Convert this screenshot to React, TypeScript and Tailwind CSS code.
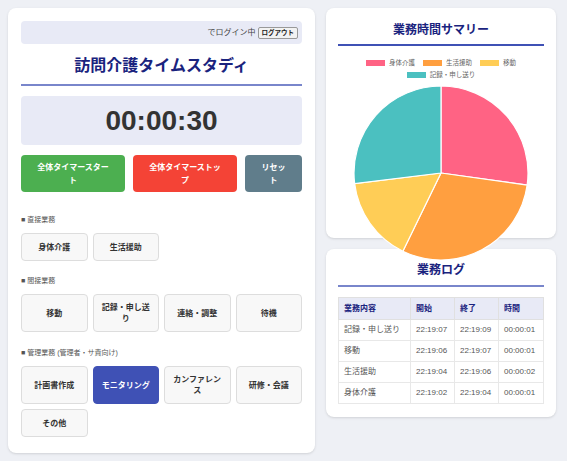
import React from 'react'

const direct = ['身体介護', '生活援助']
const indirect = ['移動', '記録・申し送り', '連絡・調整', '待機']
const admin = ['計画書作成', 'モニタリング', 'カンファレンス', '研修・会議', 'その他']

const legend = [
  { label: '身体介護', color: 'bg-[#ff6384]' },
  { label: '生活援助', color: 'bg-[#ff9f40]' },
  { label: '移動', color: 'bg-[#ffcd56]' },
  { label: '記録・申し送り', color: 'bg-[#4bc0c0]' },
]

const logs = [
  ['記録・申し送り', '22:19:07', '22:19:09', '00:00:01'],
  ['移動', '22:19:06', '22:19:07', '00:00:01'],
  ['生活援助', '22:19:04', '22:19:06', '00:00:02'],
  ['身体介護', '22:19:02', '22:19:04', '00:00:01'],
]

function TaskButton({ label, active }: { label: string; active?: boolean }) {
  return (
    <button
      className={
        active
          ? 'flex min-h-[28px] items-center justify-center rounded-[4px] border border-[#3f51b5] bg-[#3f51b5] px-[7px] py-[7px] text-[8px] font-bold leading-[11px] text-white'
          : 'flex min-h-[28px] items-center justify-center rounded-[4px] border border-[#dddddd] bg-[#f8f8f8] px-[7px] py-[7px] text-[8px] font-semibold leading-[11px] text-[#333]'
      }
    >
      {label}
    </button>
  )
}

function Section({ title, items, active, className }: { title: string; items: string[]; active?: string; className: string }) {
  return (
    <div className={className}>
      <p className="text-[7px] leading-[12px] text-[#555]">■ {title}</p>
      <div className="mt-[7px] grid grid-cols-4 gap-[5px]">
        {items.map((it) => (
          <TaskButton key={it} label={it} active={it === active} />
        ))}
      </div>
    </div>
  )
}

function Pie() {
  return (
    <svg width="176" height="176" viewBox="0 0 176 176" className="relative z-10">
      <g stroke="#fff" strokeWidth="1.2">
        <path d="M88 88 L88 1 A87 87 0 0 1 174.15 100.11 Z" fill="#ff6384" />
        <path d="M88 88 L174.15 100.11 A87 87 0 0 1 49.86 166.2 Z" fill="#ff9f40" />
        <path d="M88 88 L49.86 166.2 A87 87 0 0 1 1.65 98.6 Z" fill="#ffcd56" />
        <path d="M88 88 L1.65 98.6 A87 87 0 0 1 88 1 Z" fill="#4bc0c0" />
      </g>
    </svg>
  )
}

export default function App() {
  return (
    <div className="flex min-h-screen gap-[11px] bg-[#eef0f5] p-2 font-['Liberation_Sans','Noto_Sans_CJK_JP',sans-serif] text-[#333]">
      <div className="w-[307px] rounded-lg bg-white p-[13px] shadow-sm">
        <div className="flex h-[23px] items-center justify-end gap-[2px] rounded-[4px] bg-[#e8eaf6] pr-[4px]">
          <span className="text-[8px] text-[#444]">でログイン中</span>
          <button className="h-[12px] rounded-[2px] border border-[#999] bg-[#f2f2f2] px-[3px] text-[6.5px] font-bold leading-[10px] text-[#222]">
            ログアウト
          </button>
        </div>

        <h1 className="mt-[10px] border-b-2 border-[#7986cb] pb-[6px] text-center text-[16px] font-bold leading-[24px] text-[#1a237e]">
          訪問介護タイムスタディ
        </h1>

        <div className="mt-[10px] flex h-[49px] items-center justify-center rounded-[4px] bg-[#e8eaf6]">
          <span className="text-[28px] font-bold text-[#333]">00:00:30</span>
        </div>

        <div className="mt-[10px] flex gap-[8px]">
          <button className="flex h-[37px] w-[104px] items-center justify-center rounded-[4px] bg-[#4caf50] px-[14px] text-[8px] font-bold leading-[13px] text-white">
            全体タイマースタート
          </button>
          <button className="flex h-[37px] w-[104px] items-center justify-center rounded-[4px] bg-[#f44336] px-[14px] text-[8px] font-bold leading-[13px] text-white">
            全体タイマーストップ
          </button>
          <button className="flex h-[37px] flex-1 items-center justify-center rounded-[4px] bg-[#607d8b] px-[14px] text-[8px] font-bold leading-[13px] text-white">
            リセット
          </button>
        </div>

        <Section className="mt-[22px]" title="直接業務" items={direct} />
        <Section className="mt-[14px]" title="間接業務" items={indirect} />
        <Section className="mt-[15px]" title="管理業務 (管理者・サ責向け)" items={admin} active="モニタリング" />
      </div>

      <div className="flex w-[230px] flex-col gap-[11px]">
        <div className="flex h-[230px] flex-col rounded-lg bg-white px-[12px] pt-[13px] shadow-sm">
          <h2 className="border-b-2 border-[#3f51b5] pb-[5px] text-center text-[12px] font-bold leading-[18px] text-[#1a237e]">
            業務時間サマリー
          </h2>
          <div className="mt-[11px] flex flex-wrap justify-center gap-x-[8px] px-[20px]">
            {legend.map((l) => (
              <div key={l.label} className="flex h-[12px] items-center gap-[4px]">
                <span className={`h-[6px] w-[19px] ${l.color}`} />
                <span className="text-[6.5px] text-[#666]">{l.label}</span>
              </div>
            ))}
          </div>
          <div className="mt-[4px] flex justify-center">
            <Pie />
          </div>
        </div>

        <div className="rounded-lg bg-white px-[12px] pb-[13px] pt-[12px] shadow-sm">
          <h2 className="border-b-2 border-[#7986cb] pb-[6px] text-center text-[12px] font-bold leading-[18px] text-[#1a237e]">
            業務ログ
          </h2>
          <table className="mt-[10px] w-full border-collapse text-left text-[8px]">
            <thead>
              <tr className="bg-[#e8eaf6] text-[#1a237e]">
                <th className="w-[72px] border border-[#e0e0e0] px-[5px] py-[5px] font-bold leading-[11px]">業務内容</th>
                <th className="w-[44px] border border-[#e0e0e0] px-[5px] py-[5px] font-bold leading-[11px]">開始</th>
                <th className="w-[44px] border border-[#e0e0e0] px-[5px] py-[5px] font-bold leading-[11px]">終了</th>
                <th className="border border-[#e0e0e0] px-[5px] py-[5px] font-bold leading-[11px]">時間</th>
              </tr>
            </thead>
            <tbody>
              {logs.map((row) => (
                <tr key={row[0]}>
                  {row.map((c, i) => (
                    <td key={i} className="border border-[#e8e8e8] px-[5px] py-[5px] leading-[10px] text-[#555]">
                      {c}
                    </td>
                  ))}
                </tr>
              ))}
            </tbody>
          </table>
        </div>
      </div>
    </div>
  )
}
